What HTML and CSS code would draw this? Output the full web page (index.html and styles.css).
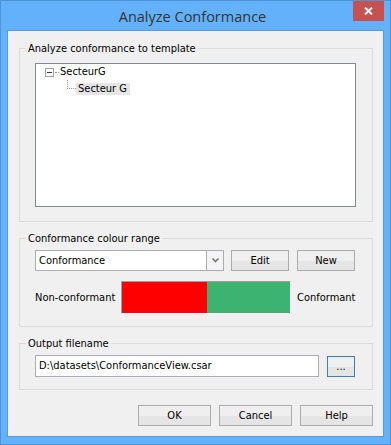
FILE: index.html
```html
<!DOCTYPE html>
<html lang="en">
<head>
  <meta charset="UTF-8" />
  <title>Analyze Conformance</title>
  <link rel="stylesheet" href="styles.css">
</head>
<body>

<div class="window">
  <div class="titlebar">
    <span class="title">Analyze Conformance</span>
    <span class="close">
      <svg width="9" height="8" viewBox="0 0 9 8"><path d="M1 0.5 L8 7.5 M8 0.5 L1 7.5" stroke="#fff" stroke-width="2"/></svg>
    </span>
  </div>

  <div class="client">
    <fieldset class="group">
      <legend>Analyze conformance to template</legend>
      <div class="group-body">
        <div class="tree">
          <div class="node">
            <span class="toggle"><span class="minus"></span></span>
            <span class="line-h"></span>
            <span class="label">SecteurG</span>
          </div>
          <div class="node child">
            <span class="elbow"></span>
            <span class="label selected">Secteur G</span>
          </div>
        </div>
      </div>
    </fieldset>

    <fieldset class="group">
      <legend>Conformance colour range</legend>
      <div class="group-body range-body">
        <div class="row">
          <div class="combo">
            <span class="combo-text">Conformance</span>
            <span class="combo-arrow">
              <svg width="7" height="5" viewBox="0 0 7 5"><path d="M0.5 0.5 L3.5 3.5 L6.5 0.5" fill="none" stroke="#6a6a6a" stroke-width="1.4"/></svg>
            </span>
          </div>
          <button class="btn btn-small">Edit</button>
          <button class="btn btn-small">New</button>
        </div>
        <div class="row scale-row">
          <span class="scale-label">Non-conformant</span>
          <div class="scale">
            <span class="scale-red"></span>
            <span class="scale-green"></span>
          </div>
          <span class="scale-label-end">Conformant</span>
        </div>
      </div>
    </fieldset>

    <fieldset class="group">
      <legend>Output filename</legend>
      <div class="group-body output-body">
        <div class="row">
          <div class="field">D:\datasets\ConformanceView.csar</div>
          <button class="btn btn-browse">...</button>
        </div>
      </div>
    </fieldset>

    <div class="actions">
      <button class="btn btn-wide">OK</button>
      <button class="btn btn-wide">Cancel</button>
      <button class="btn btn-wide">Help</button>
    </div>
  </div>
</div>

</body>
</html>
```

FILE: styles.css
```css
body { margin: 0; font: 11px "DejaVu Sans Condensed", "DejaVu Sans", sans-serif; color: #000; }

.window {
  width: 391px; height: 445px; box-sizing: border-box;
  background: #64b1fb; border: 1px solid #4f93d6;
  display: flex; flex-direction: column;
}
.titlebar {
  height: 29px; display: grid; grid-template-columns: 1fr auto 1fr;
  padding-right: 6px;
}
.title {
  grid-column: 2; align-self: center; padding-top: 1px;
  font: 14.5px "Open Sans", "Noto Sans", sans-serif; color: #333;
}
.close {
  grid-column: 3; justify-self: end; align-self: start;
  width: 31px; height: 20px; background: #c75050;
  display: flex; align-items: center; justify-content: center;
}

.client {
  margin: 0 6px 7px 6px; flex: 1;
  background: #f0f0f0; border: 1px solid #5a9ada;
  padding: 0 10px 0 11px;
}

.group { margin: 11px 0 0; padding: 0; border: 1px solid #dcdcdc; min-width: 0; }
.group + .group { margin-top: 10px; }
legend { margin-left: 6px; padding: 0 2px; line-height: 13px; height: 13px; }
.group-body { padding: 8px 16px 14px 15px; }

.tree {
  width: 321px; height: 144px; box-sizing: border-box;
  background: #fff; border: 1px solid #828790;
}
.node { height: 16px; display: flex; align-items: center; padding-left: 9px; }
.toggle {
  width: 9px; height: 9px; box-sizing: border-box; border: 1px solid #a0a0a0;
  display: flex; align-items: center; justify-content: center; background: #fff;
}
.minus { width: 5px; height: 1px; background: #3a3a3a; }
.line-h { width: 4px; border-top: 1px dotted #a0a0a0; margin-left: 1px; }
.label { padding: 0 2px 0 1px; line-height: 12px; }
.child { padding-left: 31px; align-items: flex-start; }
.elbow {
  width: 9px; height: 9px; box-sizing: border-box;
  border-left: 1px dotted #a0a0a0; border-bottom: 1px dotted #a0a0a0;
}
.child .label { margin-top: 3px; }
.selected { background: #e6e6e6; padding: 0 3px 0 2px; }

.range-body { padding: 5px 16px 12px 15px; }
.row { display: flex; align-items: center; }
.combo {
  width: 189px; height: 21px; box-sizing: border-box;
  background: #fff; border: 1px solid #abadb3; display: flex;
}
.combo-text { flex: 1; padding-left: 3px; line-height: 19px; }
.combo-arrow {
  width: 16px; border-left: 1px solid #abadb3; background: #f4f4f4;
  display: flex; align-items: center; justify-content: center;
}
.btn {
  height: 21px; box-sizing: border-box; padding: 0;
  font: inherit; color: #000;
  border: 1px solid #acacac;
  background: linear-gradient(#efefef 0 50%, #e5e5e5 50%);
}
.btn-small { width: 58px; margin-left: 7px; }
.btn-small + .btn-small { margin-left: 8px; }

.scale-row { margin-top: 10px; }
.scale-label { width: 86px; }
.scale {
  width: 170px; height: 33px; box-sizing: border-box; display: flex;
  border: 1px solid; border-color: #a0a0a0 #fff #fff #a0a0a0;
}
.scale-red { width: 85px; background: #ff0000; }
.scale-green { flex: 1; background: #3cb371; }
.scale-label-end { margin-left: 6px; }

.output-body { padding: 5px 16px 12px 15px; }
.field {
  width: 284px; height: 22px; box-sizing: border-box;
  background: #fff; border: 1px solid #abadb3;
  padding-left: 3px; line-height: 20px;
}
.btn-browse { width: 28px; margin-left: 8px; border-color: #3c7fb1; }

.actions { display: flex; justify-content: flex-end; margin-top: 15px; }
.btn-wide { width: 73px; margin-left: 7px; }
.btn-wide + .btn-wide { margin-left: 8px; }
```
